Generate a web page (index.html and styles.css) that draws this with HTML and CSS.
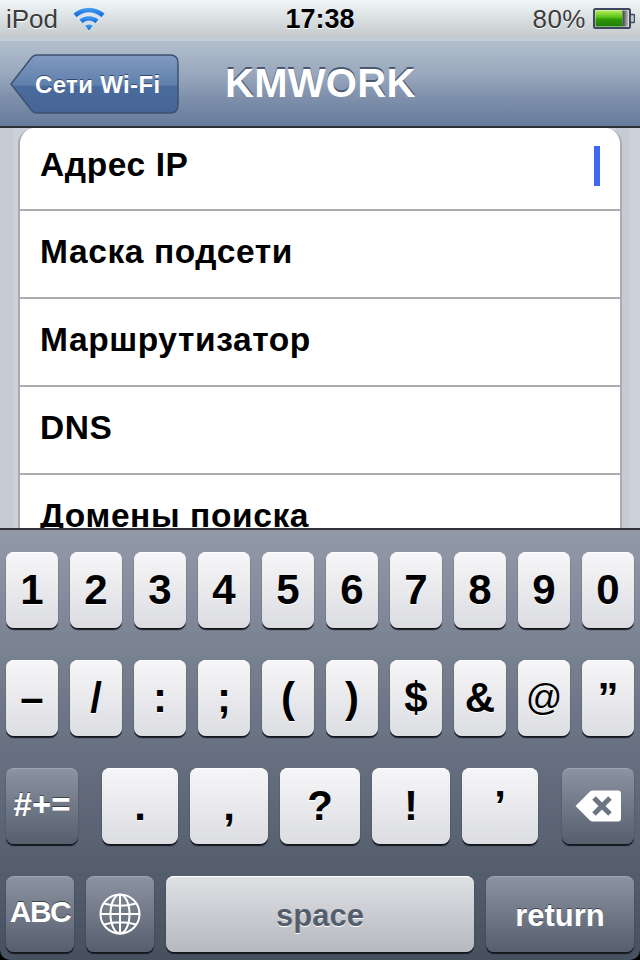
FILE: index.html
```html
<!DOCTYPE html>
<html lang="ru">
<head>
<meta charset="utf-8">
<title>KMWORK</title>
<link rel="stylesheet" href="styles.css">
</head>
<body>
<div class="screen">
  <header class="status">
    <div class="status-left">
      <span class="carrier">iPod</span>
      <svg class="wifi" width="34" height="26" viewBox="0 0 34 26">
        <defs><linearGradient id="wf" x1="0" y1="0" x2="0" y2="1"><stop offset="0" stop-color="#4aa4f0"/><stop offset="1" stop-color="#0a5fd8"/></linearGradient></defs>
        <path d="M1 7.500 C10 -0.500 24 -0.500 33 7.500 L29.500 11.500 C22 5 12 5 4.500 11.500 Z" fill="url(#wf)" stroke="#fff" stroke-width=".6"/>
        <path d="M7 13.500 C13 8.500 21 8.500 27 13.500 L23.500 17.500 C19.500 14.200 14.500 14.200 10.500 17.500 Z" fill="url(#wf)" stroke="#fff" stroke-width=".6"/>
        <path d="M12.500 19.500 C15.500 17.500 18.500 17.500 21.500 19.500 L17 25 Z" fill="url(#wf)" stroke="#fff" stroke-width=".6"/>
      </svg>
    </div>
    <span class="time">17:38</span>
    <div class="status-right">
      <span class="percent">80%</span>
      <svg class="battery" width="42" height="22" viewBox="0 0 42 22">
        <defs>
          <linearGradient id="bg" x1="0" y1="0" x2="0" y2="1"><stop offset="0" stop-color="#b4ee5a"/><stop offset=".45" stop-color="#52bc12"/><stop offset=".55" stop-color="#2f9a08"/><stop offset="1" stop-color="#1e7c04"/></linearGradient>
          <linearGradient id="bh" x1="0" y1="0" x2="1" y2="0"><stop offset="0" stop-color="#3d3d40"/><stop offset="1" stop-color="#c6c6c8"/></linearGradient>
        </defs>
        <rect x="1" y="1" width="36" height="19" rx="1.5" fill="#e6e8ea" stroke="#3f475c" stroke-width="2"/>
        <rect x="2.500" y="2.500" width="27" height="16" fill="url(#bg)"/>
        <rect x="29.500" y="2.500" width="6" height="16" fill="url(#bh)"/>
        <path d="M38 6.500h2.500a1 1 0 0 1 1 1v6a1 1 0 0 1-1 1H38" fill="#c8ccd4" stroke="#3f475c" stroke-width="1.500"/>
      </svg>
    </div>
  </header>

  <nav class="navbar">
    <div class="back">
      <svg class="back-shape" width="170" height="60" viewBox="0 0 170 60">
        <defs><linearGradient id="bk" x1="0" y1="0" x2="0" y2="1"><stop offset="0" stop-color="#819ac0"/><stop offset=".52" stop-color="#5f80ad"/><stop offset=".54" stop-color="#4a6b9d"/><stop offset="1" stop-color="#456695"/></linearGradient></defs>
        <path d="M1 30 L22 3 Q24 1 27 1 H160 Q168 1 168 9 V51 Q168 59 160 59 H27 Q24 59 22 57 Z" fill="url(#bk)" stroke="#3e5270" stroke-width="1.500"/>
      </svg>
      <span class="back-label">Сети Wi-Fi</span>
    </div>
    <h1 class="title">KMWORK</h1>
  </nav>

  <main class="content">
    <ul class="group">
      <li class="row row-first"><span>Адрес IP</span><i class="caret"></i></li>
      <li class="row"><span>Маска подсети</span></li>
      <li class="row"><span>Маршрутизатор</span></li>
      <li class="row"><span>DNS</span></li>
      <li class="row"><span>Домены поиска</span></li>
    </ul>
  </main>

  <section class="keyboard">
    <div class="keys">
      <div class="key-row">
        <div class="key k52">1</div><div class="key k52">2</div><div class="key k52">3</div><div class="key k52">4</div><div class="key k52">5</div><div class="key k52">6</div><div class="key k52">7</div><div class="key k52">8</div><div class="key k52">9</div><div class="key k52">0</div>
      </div>
      <div class="key-row">
        <div class="key k52">–</div><div class="key k52">/</div><div class="key k52">:</div><div class="key k52">;</div><div class="key k52">(</div><div class="key k52">)</div><div class="key k52">$</div><div class="key k52">&amp;</div><div class="key k52 at">@</div><div class="key k52">”</div>
      </div>
      <div class="key-row">
        <div class="key dark k72 symbols">#+=</div>
        <div class="key-group">
          <div class="key k76">.</div><div class="key k78">,</div><div class="key k80">?</div><div class="key k78">!</div><div class="key k76">’</div>
        </div>
        <div class="key dark k72">
          <svg width="46" height="34" viewBox="0 0 46 34">
            <path d="M0.500 17 L15 2.500 Q16 1.500 18 1.500 H43 Q46 1.500 46 4.500 V29.500 Q46 32.500 43 32.500 H18 Q16 32.500 15 31.500 Z" fill="#fff"/>
            <path d="M19 9 L35 25 M35 9 L19 25" stroke="#6d7585" stroke-width="5" fill="none"/>
          </svg>
        </div>
      </div>
      <div class="key-row">
        <div class="key dark k68 abc">ABC</div>
        <div class="key dark k68">
          <svg width="42" height="42" viewBox="0 0 42 42" fill="none" stroke="#fff" stroke-width="2">
            <circle cx="21" cy="21" r="19.500"/>
            <ellipse cx="21" cy="21" rx="9.500" ry="19.500"/>
            <path d="M21 1.500V40.500M1.500 21H40.500M5 10.500Q21 15 37 10.500M5 31.500Q21 27 37 31.500"/>
          </svg>
        </div>
        <div class="key k308 word space">space</div>
        <div class="key dark k148 word">return</div>
      </div>
    </div>
  </section>
</div>
</body>
</html>
```
FILE: styles.css
```css
* { box-sizing: border-box; }
html, body { margin: 0; padding: 0; background: #000; }
body { font-family: "Liberation Sans", Arial, sans-serif; }
.screen {
  width: 640px;
  height: 960px;
  display: flex;
  flex-direction: column;
  overflow: hidden;
}

/* status bar */
.status {
  height: 41px;
  flex: none;
  display: grid;
  grid-template-columns: 1fr auto 1fr;
  align-items: center;
  padding: 0 6px;
  background: linear-gradient(#f1f6f9, #c3c9cb);
  border-bottom: 3px solid;
  border-image: linear-gradient(#6a6d70 0 66%, #c4ced8 66%) 1;
}
.status-left { display: flex; align-items: center; gap: 14px; }
.status-right { display: flex; align-items: center; justify-content: flex-end; gap: 7px; }
.carrier, .percent { font-size: 26px; color: #3c3c3c; text-shadow: 0 1px 0 #fff; }
.percent { letter-spacing: .5px; }
.time { font-size: 27px; font-weight: bold; color: #000; text-shadow: 0 1px 0 #fff; }
.wifi { display: block; }
.battery { display: block; margin-right: -1px; }

/* navigation bar */
.navbar {
  height: 87px;
  flex: none;
  display: flex;
  align-items: center;
  padding: 0 0 0 10px;
  background: linear-gradient(#b3bfcd, #98a7bd 40%, #7f91ac 65%, #667b9c);
  border-bottom: 2px solid #2c2f33;
}
.back {
  position: relative;
  width: 170px;
  height: 60px;
  flex: none;
  display: flex;
  align-items: center;
  padding: 2px 0 0 25px;
}
.back-shape { position: absolute; left: 0; top: 0; }
.back-label {
  position: relative;
  font-size: 24px;
  font-weight: bold;
  letter-spacing: .35px;
  color: #fff;
  text-shadow: 0 -1px 0 #37496a;
}
.title {
  margin: 0 0 2px 45px;
  font-size: 40px;
  line-height: 46px;
  font-weight: bold;
  letter-spacing: .3px;
  color: #fff;
  text-shadow: 0 -2px 0 #4a5870;
}

/* grouped table */
.content {
  height: 400px;
  flex: none;
  overflow: hidden;
  padding: 0 18px;
  background: repeating-linear-gradient(90deg, #c5ccd4 0 14px, #cbd2da 14px 28px);
}
.group {
  list-style: none;
  margin: 0;
  padding: 0;
  background: #fff;
  border: solid #aaacae;
  border-width: 0 2px;
  border-radius: 16px 16px 0 0;
}
.row {
  height: 88px;
  display: flex;
  align-items: center;
  justify-content: space-between;
  padding: 0 20px 4px;
  font-size: 33.500px;
  font-weight: bold;
  letter-spacing: .6px;
  color: #000;
  border-bottom: 2px solid #aaacae;
}
.row-first { height: 83px; padding-bottom: 8px; }
.caret { width: 6px; height: 40px; margin-top: 2px; background: #4068ec; }

/* keyboard */
.keyboard {
  flex: 1;
  background: #000;
}
.keys {
  height: 100%;
  display: flex;
  flex-direction: column;
  gap: 32px;
  padding: 22px 6px 0;
  background: linear-gradient(#929aa8, #6f7888 40%, #47505f);
  border-top: 2px solid #30343a;
  border-radius: 0 0 10px 10px;
}
.key-row { display: flex; justify-content: space-between; }
.key-group { display: flex; gap: 12px; }
.key {
  height: 76px;
  flex: none;
  display: flex;
  align-items: center;
  justify-content: center;
  border-radius: 8px;
  font-size: 42px;
  font-weight: bold;
  color: #000;
  background: linear-gradient(#f6f6f8, #dcdde1);
  box-shadow: inset 0 1px 0 #fff, 0 2px 1px #14171c;
  text-shadow: 0 1px 0 #fff;
}
.key.dark {
  color: #fff;
  background: linear-gradient(#8c93a1, #565f6e);
  box-shadow: inset 0 1px 0 rgba(255, 255, 255, .18), 0 2px 1px #14171c;
  text-shadow: 0 -1px 0 #3c4350;
}
.k52 { width: 52px; }
.k68 { width: 68px; }
.k72 { width: 72px; }
.k76 { width: 76px; }
.k78 { width: 78px; }
.k80 { width: 80px; }
.k148 { width: 148px; }
.k308 { width: 308px; }
.symbols { font-size: 33px; padding-bottom: 2px; }
.abc { font-size: 30px; letter-spacing: -1.500px; padding-bottom: 4px; }
.word { font-size: 31px; padding-top: 4px; }
.at { font-size: 36px; font-weight: normal; }
.space {
  color: #545d6c;
  background: linear-gradient(#e0e1e5, #b5b8bf);
}
```
